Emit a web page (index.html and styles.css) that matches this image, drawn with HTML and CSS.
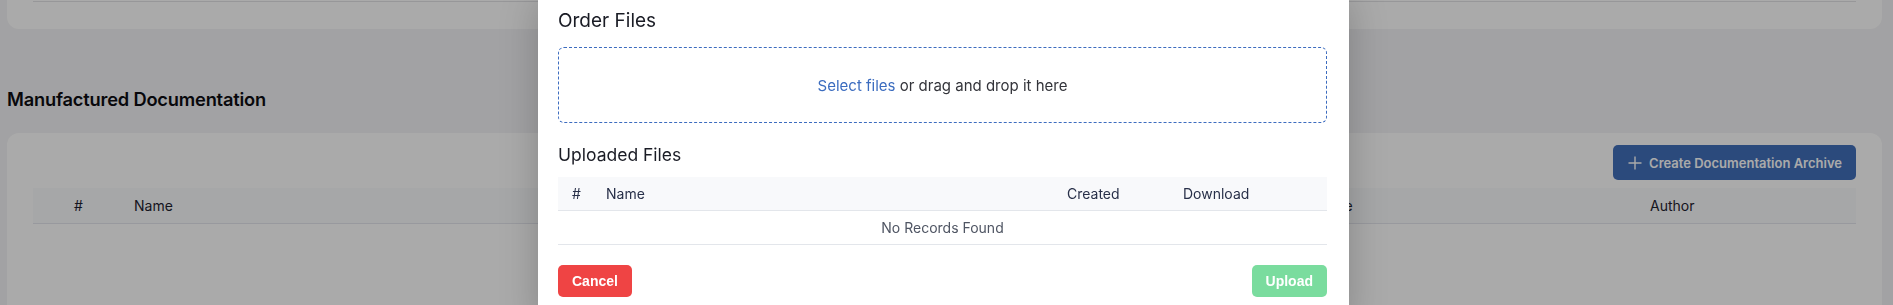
FILE: index.html
```html
<!DOCTYPE html>
<html lang="en">
<head>
  <meta charset="UTF-8">
  <meta name="viewport" content="width=device-width, initial-scale=1.0">
  <title>Manufactured Documentation</title>
  <link rel="stylesheet" href="styles.css">
</head>
<body>
  <div class="page">
    <div class="card card-top">
      <div class="row-end"></div>
    </div>

    <h2 class="section-title">Manufactured Documentation</h2>

    <div class="card card-docs">
      <div class="toolbar">
        <button class="btn-primary">
          <svg width="16" height="16" viewBox="0 0 16 16"><path d="M8 1.5v13M1.5 8h13" stroke="currentColor" stroke-width="1.4" fill="none"/></svg>
          Create Documentation Archive
        </button>
      </div>
      <div class="doc-head">
        <span class="c-num">#</span>
        <span>Name</span>
        <span>Date</span>
        <span>Author</span>
      </div>
    </div>
  </div>

  <div class="backdrop"></div>

  <div class="modal">
    <h3 class="modal-title">Order Files</h3>
    <div class="dropzone">
      <span><a class="pick">Select files</a> or drag and drop it here</span>
    </div>

    <h4 class="sub-title">Uploaded Files</h4>
    <div class="files">
      <div class="files-head">
        <span>#</span>
        <span>Name</span>
        <span>Created</span>
        <span>Download</span>
      </div>
      <div class="files-empty">No Records Found</div>
    </div>

    <div class="actions">
      <button class="btn btn-cancel">Cancel</button>
      <button class="btn btn-upload" disabled>Upload</button>
    </div>
  </div>
</body>
</html>
```

FILE: styles.css
```css
body {
  margin: 0;
  background-color: #f4f4f6;
  font-family: Inter, "Noto Sans", sans-serif;
  color: #111;
  overflow: hidden;
}
.page {
  padding: 0 11px 0 7px;
}
.card {
  background: #fff;
  border-radius: 12px;
}
.card-top {
  margin-top: -40px;
  padding: 40px 26px 27px;
}
.row-end {
  height: 1px;
  border-bottom: 1px solid #e3e3e6;
}
.section-title {
  margin: 58px 0 22px;
  font-size: 18.3px;
  line-height: 24px;
  font-weight: 600;
  letter-spacing: -0.2px;
  color: #0d0d12;
}
.card-docs {
  padding: 12px 26px 200px;
}
.toolbar {
  display: flex;
  justify-content: flex-end;
}
.btn-primary {
  display: flex;
  align-items: center;
  gap: 6px;
  height: 35px;
  padding: 0 14px;
  border: none;
  border-radius: 5px;
  background-color: #416fbb;
  color: #fff;
  font-family: Inter, sans-serif;
  font-size: 13px;
  font-weight: 600;
}
.doc-head {
  display: grid;
  grid-template-columns: 101px 1188px 328px 1fr;
  margin-top: 8px;
  height: 35px;
  align-items: center;
  background: #fafbfc;
  border-bottom: 1px solid #e4e6ee;
  font-size: 14px;
  color: #1f2230;
}
.doc-head .c-num {
  padding-left: 41px;
}
.backdrop {
  position: fixed;
  inset: 0;
  background: rgba(0, 0, 0, 0.333);
}
.modal {
  position: fixed;
  top: 0;
  bottom: -20px;
  left: 538px;
  width: 811px;
  box-sizing: border-box;
  padding: 7px 22px 0 20px;
  background: #fff;
  box-shadow: 0 0 36px rgba(0, 0, 0, 0.22);
}
.modal-title {
  margin: 0;
  font-size: 19px;
  line-height: 28px;
  font-weight: 400;
  color: #1a1c25;
}
.dropzone {
  margin-top: 12px;
  height: 76px;
  box-sizing: border-box;
  border: 1px dashed #3d6cbf;
  border-radius: 6px;
  display: flex;
  align-items: center;
  justify-content: center;
  font-size: 15px;
  color: #33343a;
}
.pick {
  color: #3b6cbf;
  cursor: pointer;
}
.sub-title {
  margin: 20px 0 10px;
  font-size: 17.5px;
  line-height: 24px;
  font-weight: 400;
  color: #1a1c25;
}
.files-head {
  display: grid;
  grid-template-columns: 34px 461px 116px 1fr;
  height: 34px;
  box-sizing: border-box;
  align-items: center;
  padding-left: 14px;
  background: #f8f9fb;
  border-bottom: 1px solid #e3e6eb;
  font-size: 14px;
  color: #283049;
}
.files-empty {
  height: 34px;
  box-sizing: border-box;
  display: flex;
  align-items: center;
  justify-content: center;
  border-bottom: 1px solid #e3e6eb;
  font-size: 14px;
  color: #4f5563;
}
.actions {
  display: flex;
  justify-content: space-between;
  margin-top: 20px;
}
.btn {
  height: 32px;
  padding: 0 14px;
  border: none;
  border-radius: 5px;
  color: #fff;
  font-family: "Liberation Sans", Arial, sans-serif;
  font-size: 14px;
  font-weight: 700;
}
.btn-cancel {
  background-color: #ef4444;
}
.btn-upload {
  background-color: #7adc9e;
}
```
